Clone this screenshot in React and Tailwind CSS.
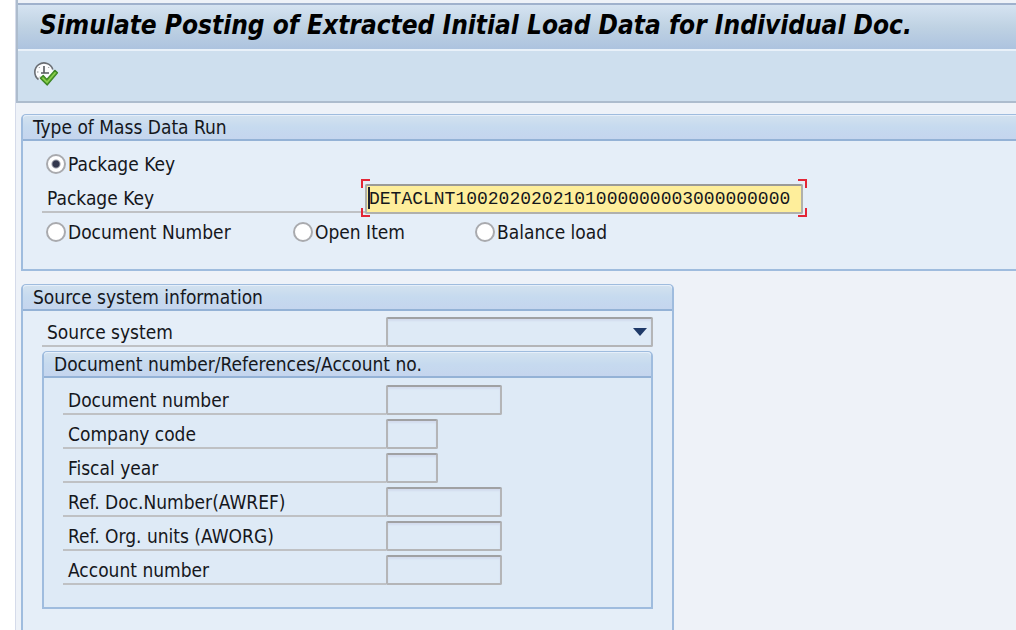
import React, { useState } from 'react';

const RUN_TYPES = [
  { id: 'document', label: 'Document Number' },
  { id: 'open', label: 'Open Item' },
  { id: 'balance', label: 'Balance load' },
];

const DOCUMENT_FIELDS = [
  { id: 'docNumber', label: 'Document number', width: 'w-[116px]' },
  { id: 'companyCode', label: 'Company code', width: 'w-[52px]' },
  { id: 'fiscalYear', label: 'Fiscal year', width: 'w-[52px]' },
  { id: 'refDoc', label: 'Ref. Doc.Number(AWREF)', width: 'w-[116px]' },
  { id: 'refOrg', label: 'Ref. Org. units (AWORG)', width: 'w-[116px]' },
  { id: 'account', label: 'Account number', width: 'w-[116px]' },
];

const fieldStyle =
  'h-full rounded-[2px] border-2 border-[#b4b5b7] border-t-[#a0a1a3] bg-[#deeaf6] shadow-[inset_0_2px_2px_#d3dcee] outline-none';

const ExecuteIcon = () => (
  <svg width="26" height="26" viewBox="0 0 26 26" fill="none">
    <circle cx="11" cy="11" r="9" fill="#fbfcfd" />
    <path d="M5.5 18.5A9.2 9.2 0 1 1 19.8 8.4" stroke="#6a6e73" strokeWidth="1.6" />
    <path d="M11 5v7h5M8 12h3" stroke="#55595e" strokeWidth="1.6" />
    <path d="M4 11h1.5M5.8 6l1 1M16.2 6l-1 1M6 16.5l1-1" stroke="#8d9296" strokeWidth="1" />
    <path
      d="M7.3 17.2l2.9-2.7 3.6 3.8L21.8 9.3l2.7 2.5L14.2 24z"
      fill="#5fae2e"
      stroke="#3c8424"
      strokeWidth="1.2"
      strokeLinejoin="round"
    />
    <path d="M9.5 16.8l4.5 4.6 8.5-10" stroke="#8fd052" strokeWidth="1.3" />
  </svg>
);

const GroupHeader = ({ children, className = '' }) => (
  <h2
    className={`h-[26px] border-b-2 border-[#94b2d6] bg-linear-to-b from-[#d3e2ef] via-[#c6daef] to-[#c5d5ee] pl-[10px] leading-6 shadow-[inset_0_1px_0_#e6effa] ${className}`}
  >
    {children}
  </h2>
);

const Radio = ({ id, label, value, onChange }) => (
  <label className="flex items-center gap-[2px]">
    <input
      type="radio"
      name="runType"
      checked={value === id}
      onChange={() => onChange(id)}
      className="size-5 shrink-0 appearance-none rounded-full border-2 border-[#a9aaae] bg-white checked:bg-[radial-gradient(circle,#33384e_0_3px,#ffffff_5px)]"
    />
    {label}
  </label>
);

const App = () => {
  const [runType, setRunType] = useState('package');
  const [packageKey, setPackageKey] = useState('DETACLNT1002020202101000000003000000000');

  return (
    <div className="flex min-h-screen flex-col overflow-x-hidden bg-white pl-[15px] font-['DejaVu_Sans_Condensed','DejaVu_Sans',sans-serif] text-[19px] text-[#15171c]">
      <div className="flex flex-1 flex-col border-l border-[#d5dbea] bg-[#eef2f8]">
        <header className="border-b-2 border-l-2 border-[#adbccd] pt-[3px]">
          <h1 className="h-12 truncate border-t-2 border-b-2 border-t-[#9fb1cc] border-b-[#e9f1f9] bg-linear-to-b from-[#d5e3f1] via-[#bfd2e3] to-[#adc3df] pl-[22px] text-[26px] leading-10 font-bold text-black italic">
            Simulate Posting of Extracted Initial Load Data for Individual Doc.
          </h1>
          <div className="h-[50px] bg-[#cedfee] pt-[10px] pl-[15px]">
            <button type="button" aria-label="Execute" className="block">
              <ExecuteIcon />
            </button>
          </div>
        </header>

        <main className="flex flex-1 flex-col gap-[13px] pt-[11px] pl-[5px]">
          <section className="rounded-tl-[5px] border-t border-b-2 border-l-2 border-[#9fbcde] bg-[#e5eef8] pb-[22px]">
            <GroupHeader className="rounded-tl-[4px]">Type of Mass Data Run</GroupHeader>
            <div className="flex flex-col gap-1 pt-2 pl-[19px]">
              <div className="flex h-[30px] items-center pl-1">
                <Radio id="package" label="Package Key" value={runType} onChange={setRunType} />
              </div>
              <div className="flex h-[30px]">
                <label
                  htmlFor="packageKey"
                  className="w-[323px] border-b-2 border-[#bfc1c4] pl-[5px] leading-[30px]"
                >
                  Package Key
                </label>
                <div className="relative w-[438px]">
                  <input
                    id="packageKey"
                    value={packageKey}
                    onChange={(e) => setPackageKey(e.target.value)}
                    className="h-full w-full rounded-[2px] border-2 border-[#b0b0ac] border-t-[#9b9b98] bg-[#feee9b] pl-[2px] font-['Liberation_Mono',monospace] text-[18px] outline-none"
                  />
                  {/* cursor and focus corners */}
                  <span className="absolute top-1 left-[3px] h-[22px] w-[2px] bg-[#1d2433]" />
                  <span className="absolute -top-1 -left-1 size-[9px] border-t-2 border-l-2 border-[#e32636]" />
                  <span className="absolute -top-1 -right-1 size-[9px] border-t-2 border-r-2 border-[#e32636]" />
                  <span className="absolute -bottom-1 -left-1 size-[9px] border-b-2 border-l-2 border-[#e32636]" />
                  <span className="absolute -right-1 -bottom-1 size-[9px] border-r-2 border-b-2 border-[#e32636]" />
                </div>
              </div>
              <div className="grid h-[30px] grid-cols-[247px_182px_auto] items-center pl-1">
                {RUN_TYPES.map((type) => (
                  <Radio key={type.id} {...type} value={runType} onChange={setRunType} />
                ))}
              </div>
            </div>
          </section>

          <section className="flex w-[653px] flex-1 flex-col rounded-t-[5px] border-x-2 border-t border-[#9fbcde] bg-[#e5eef8] pb-5">
            <GroupHeader className="rounded-t-[4px]">Source system information</GroupHeader>
            <div className="px-[19px] pt-[6px]">
              <div className="flex h-[30px]">
                <label
                  htmlFor="sourceSystem"
                  className="w-[344px] border-b-2 border-[#bfc1c4] pl-[5px] leading-[30px]"
                >
                  Source system
                </label>
                <div className="relative flex-1">
                  <select id="sourceSystem" className={`w-full appearance-none ${fieldStyle}`}>
                    <option value=""></option>
                  </select>
                  <svg
                    width="14"
                    height="8"
                    viewBox="0 0 14 8"
                    className="pointer-events-none absolute top-[11px] right-[6px]"
                  >
                    <path d="M0 0h14L7 8z" fill="#1f3a68" />
                  </svg>
                </div>
              </div>

              <div className="mt-1 rounded-t-[5px] border-x-2 border-t border-b-2 border-[#9fbcde] bg-[#deeaf6] pb-[22px]">
                <GroupHeader className="rounded-t-[4px]">
                  Document number/References/Account no.
                </GroupHeader>
                <div className="flex flex-col gap-1 pt-[7px] pl-[19px]">
                  {DOCUMENT_FIELDS.map((field) => (
                    <div key={field.id} className="flex h-[30px]">
                      <label
                        htmlFor={field.id}
                        className="w-[323px] border-b-2 border-[#bfc1c4] pl-[5px] leading-[30px]"
                      >
                        {field.label}
                      </label>
                      <input id={field.id} className={`${field.width} ${fieldStyle}`} />
                    </div>
                  ))}
                </div>
              </div>
            </div>
          </section>
        </main>
      </div>
    </div>
  );
};

export default App;
